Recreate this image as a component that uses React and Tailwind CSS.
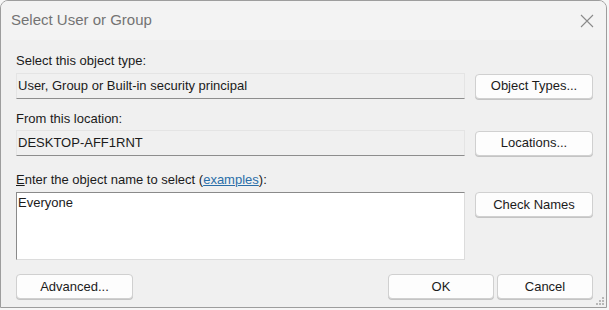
import React from "react";

const font = { fontFamily: '"Segoe UI", "Liberation Sans", Arial, sans-serif' };

function Btn({ children, className = "" }) {
    return (
        <button
            className={`h-[25px] rounded-[4px] border border-[#d0d0d0] bg-[#fdfdfd] text-[13px] text-[#1b1b1b] shadow-[0_1px_0_#c4c4c4] ${className}`}
        >
            {children}
        </button>
    );
}

function ReadField({ value }) {
    return (
        <div className="h-[26px] w-[449px] border border-[#e4e4e4] border-b-[#8d8d8d] bg-[#f0f0f0] px-[1px] text-[13px] leading-[24px] text-[#1b1b1b]">
            {value}
        </div>
    );
}

export default function App() {
    return (
        <div className="h-[310px] w-[609px] bg-[#f6f6f6]" style={font}>
            <div className="flex h-[308px] w-[607px] flex-col overflow-hidden rounded-t-[8px] border border-[#9d9d9d] bg-[#f0f0f0]">
                {/* title bar */}
                <div className="flex h-[39px] shrink-0 items-center justify-between bg-[#f3f3f3] pl-[10px] pr-[12px]">
                    <span className="text-[15px] text-[#737373]">Select User or Group</span>
                    <svg width="14" height="14" viewBox="0 0 14 14">
                        <path d="M1 1 L13 13 M13 1 L1 13" stroke="#8a8a8a" strokeWidth="1.1" />
                    </svg>
                </div>

                <div className="relative flex flex-1 flex-col pl-[15px] pr-[13px]">
                    <div className="mt-[13px] text-[13px] leading-[16px] text-[#1b1b1b]">Select this object type:</div>
                    <div className="mt-[4px] flex items-center gap-[10px]">
                        <ReadField value="User, Group or Built-in security principal" />
                        <Btn className="w-[118px]">Object Types...</Btn>
                    </div>

                    <div className="mt-[12px] text-[13px] leading-[16px] text-[#1b1b1b]">From this location:</div>
                    <div className="mt-[3px] flex items-center gap-[10px]">
                        <ReadField value="DESKTOP-AFF1RNT" />
                        <Btn className="w-[118px]">Locations...</Btn>
                    </div>

                    <div className="mt-[16px] text-[13px] leading-[16px] text-[#1b1b1b]">
                        <span className="underline">E</span>nter the object name to select (
                        <span className="text-[#2a6ea8] underline">examples</span>):
                    </div>
                    <div className="mt-[4px] flex items-start gap-[10px]">
                        <div className="h-[68px] w-[449px] border border-[#8a8a8a] border-b-[#dcdcdc] border-r-[#dcdcdc] bg-white px-[1px] text-[13px] leading-[20px] text-[#1b1b1b]">
                            Everyone
                        </div>
                        <Btn className="w-[118px]">Check Names</Btn>
                    </div>

                    <div className="mt-[14px] flex items-center">
                        <Btn className="w-[117px]">Advanced...</Btn>
                        <div className="flex-1" />
                        <Btn className="w-[106px]">OK</Btn>
                        <Btn className="ml-[3px] w-[96px]">Cancel</Btn>
                    </div>

                    {/* resize grip */}
                    <svg className="absolute bottom-[1px] right-[1px]" width="10" height="10" viewBox="0 0 10 10">
                        <rect x="7" y="1" width="2" height="2" fill="#b8b8b8" />
                        <rect x="4" y="4" width="2" height="2" fill="#b8b8b8" />
                        <rect x="7" y="4" width="2" height="2" fill="#b8b8b8" />
                        <rect x="1" y="7" width="2" height="2" fill="#b8b8b8" />
                        <rect x="4" y="7" width="2" height="2" fill="#b8b8b8" />
                        <rect x="7" y="7" width="2" height="2" fill="#b8b8b8" />
                    </svg>
                </div>
            </div>
        </div>
    );
}
